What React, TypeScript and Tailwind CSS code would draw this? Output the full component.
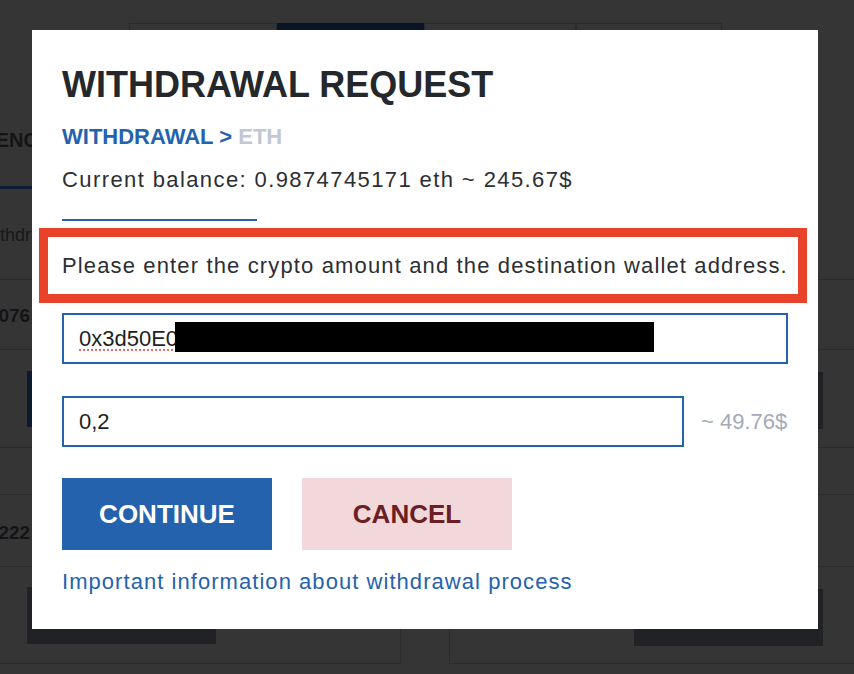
const rowLine = "border-b border-[#2c2c30]";

function BackgroundPage() {
    return (
        <div className="flex flex-col">
            {/* tabs */}
            <div className="flex pl-[129px] pt-[23px] h-[71px]">
                <div className="w-[148px] h-[48px] border border-[#2a2b2f]" />
                <div className="w-[147px] h-[48px] bg-[#0a1524]" />
                <div className="w-[152px] h-[48px] border border-[#2a2b2f]" />
                <div className="w-[146px] h-[48px] border border-[#2a2b2f]" />
            </div>

            <div className="flex">
                {/* left card */}
                <div className="-ml-[4px] w-[405px] shrink-0 flex flex-col border-r border-[#2c2c30]">
                    <div className="h-[118px] border-b-[3px] border-[#0e1d33] flex items-center pt-[23px]">
                        <span className="-ml-[58px] text-[20px] font-bold text-[#141416] whitespace-nowrap">CURRENCY</span>
                    </div>
                    <div className={`h-[91px] flex items-center pt-[2px] ${rowLine}`}>
                        <span className="-ml-[17px] text-[18px] text-[#17181a] whitespace-nowrap">Withdrawal</span>
                    </div>
                    <div className={`h-[70px] flex items-center pt-[4px] ${rowLine}`}>
                        <span className="-ml-[24px] text-[19px] font-bold text-[#141416] whitespace-nowrap">0.0076</span>
                    </div>
                    <div className={`h-[98px] pt-[21px] pl-[31px] ${rowLine}`}>
                        <div className="w-[189px] h-[56px] bg-[#0b1a2d]" />
                    </div>
                    <div className={`h-[47px] ${rowLine}`} />
                    <div className={`h-[72px] flex items-center pt-[6px] ${rowLine}`}>
                        <span className="-ml-[24px] text-[19px] font-bold text-[#141416] whitespace-nowrap">0.0222</span>
                    </div>
                    <div className={`h-[97px] pt-[20px] pl-[31px] ${rowLine}`}>
                        <div className="w-[189px] h-[57px] bg-[#212226]" />
                    </div>
                </div>

                <div className="w-[48px] shrink-0" />

                {/* right card */}
                <div className="w-[405px] shrink-0 flex flex-col border-l border-[#2c2c30]">
                    <div className="h-[118px] border-b-[3px] border-transparent" />
                    <div className={`h-[91px] ${rowLine}`} />
                    <div className={`h-[70px] ${rowLine}`} />
                    <div className={`h-[98px] pt-[22px] pr-[31px] flex justify-end items-start ${rowLine}`}>
                        <div className="w-[189px] h-[57px] bg-[#222226]" />
                    </div>
                    <div className={`h-[47px] ${rowLine}`} />
                    <div className={`h-[72px] ${rowLine}`} />
                    <div className={`h-[97px] pt-[22px] pr-[31px] flex justify-end items-start ${rowLine}`}>
                        <div className="w-[189px] h-[57px] bg-[#212226]" />
                    </div>
                </div>
            </div>
        </div>
    );
}

function WithdrawalModal() {
    return (
        <div className="absolute left-[32px] top-[30px] w-[786px] bg-white px-[30px] pt-[37px] pb-[36px]">
            <h1 className="text-[36px] leading-[36px] font-bold text-[#24272b]">WITHDRAWAL REQUEST</h1>

            <div className="mt-[23px] text-[22px] leading-[22px] font-bold">
                <span className="text-[#2462ad]">WITHDRAWAL &gt;</span>{" "}
                <span className="text-[#c1c7d3]">ETH</span>
            </div>

            <p className="mt-[21px] text-[22px] leading-[22px] tracking-[1.4px] text-[#2b2e33]">
                Current balance: 0.9874745171 eth ~ 245.67$
            </p>

            <div className="mt-[28px] h-[2px] w-[195px] bg-[#2462ad]" />

            <div className="mt-[7px] -ml-[23px] -mr-[19px] h-[75px] border-[9px] border-[#e8432a] flex items-center pl-[14px]">
                <span className="text-[22px] leading-[22px] tracking-[1.14px] text-[#2b2e33]">
                    Please enter the crypto amount and the destination wallet address.
                </span>
            </div>

            <div className="relative mt-[10px] h-[51px] border-2 border-[#2462ad] flex items-center pl-[15px]">
                <span className="text-[22px] leading-[22px] text-[#1e1f22] underline decoration-dotted decoration-[#e86a6a] decoration-2 underline-offset-[4px]">
                    0x3d50E0
                </span>
                <div className="absolute left-[111px] top-[7px] w-[479px] h-[30px] bg-black" />
            </div>

            <div className="mt-[32px] flex items-center">
                <div className="w-[622px] h-[51px] border-2 border-[#2462ad] flex items-center pl-[15px]">
                    <span className="text-[22px] leading-[22px] text-[#1e1f22]">0,2</span>
                </div>
                <span className="ml-[17px] text-[22px] leading-[22px] text-[#a3aaba]">~ 49.76$</span>
            </div>

            <div className="mt-[31px] flex gap-[30px]">
                <button
                    type="button"
                    className="w-[210px] h-[72px] bg-[#2462ad] text-white text-[26px] font-bold flex items-center justify-center"
                >
                    CONTINUE
                </button>
                <button
                    type="button"
                    className="w-[210px] h-[72px] bg-[#f2d8da] text-[#6b1e23] text-[26px] font-bold flex items-center justify-center"
                >
                    CANCEL
                </button>
            </div>

            <p className="mt-[21px] text-[22px] leading-[22px] tracking-[1.05px] text-[#2462ad]">
                Important information about withdrawal process
            </p>
        </div>
    );
}

export default function App() {
    return (
        <div className="relative w-[854px] h-[674px] overflow-hidden bg-[#353535] font-['Liberation_Sans',Arial,sans-serif]">
            <BackgroundPage />
            <WithdrawalModal />
        </div>
    );
}
